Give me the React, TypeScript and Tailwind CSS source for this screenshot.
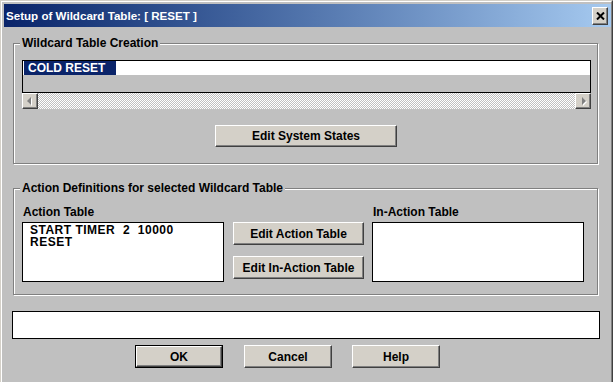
import React from "react";

const btn =
  "flex items-center justify-center bg-[#d4d0c8] border border-t-white border-l-white border-r-[#404040] border-b-[#404040] shadow-[inset_-1px_-1px_0_#808080] text-black";

function Arrow({ dir }: { dir: "left" | "right" }) {
  return (
    <div className="w-[16px] h-[16px] bg-[#d4d0c8] border border-t-white border-l-white border-r-[#404040] border-b-[#404040] shadow-[inset_-1px_-1px_0_#808080] flex items-center justify-center">
      <svg width="8" height="9" viewBox="0 0 8 9">
        {dir === "left" ? (
          <>
            <path d="M5 1 L5 9 L1 5 Z" fill="#fff" transform="translate(1,0)" />
            <path d="M5 0 L5 8 L1 4 Z" fill="#808080" />
          </>
        ) : (
          <>
            <path d="M3 1 L3 9 L7 5 Z" fill="#fff" transform="translate(1,0)" />
            <path d="M3 0 L3 8 L7 4 Z" fill="#808080" />
          </>
        )}
      </svg>
    </div>
  );
}

export default function App() {
  return (
    <div
      className="w-[613px] h-[382px] overflow-hidden bg-[#c0c0c0] border-t border-l border-r border-t-[#d4d0c8] border-l-[#d4d0c8] border-r-[#404040] text-[11px] font-bold text-black"
      style={{ fontFamily: '"Liberation Sans", Arial, sans-serif' }}
    >
      <div className="h-full border-t border-l border-r border-t-white border-l-white border-r-[#808080] pt-[2px] pl-[2px]">
        {/* Title bar */}
        <div className="h-[23px] flex items-center bg-gradient-to-r from-[#0a246a] to-[#a6caf0] pl-[2px] pr-[3px]">
          <span className="text-white text-[11.6px] leading-none">Setup of Wildcard Table: [ RESET ]</span>
          <div className="ml-auto w-[16px] h-[18px] bg-[#d4d0c8] border border-t-white border-l-white border-r-[#404040] border-b-[#404040] shadow-[inset_-1px_-1px_0_#808080] flex items-center justify-center">
            <svg width="9" height="8" viewBox="0 0 9 8">
              <path d="M1 0.5 L8 7.5 M8 0.5 L1 7.5" stroke="#000" strokeWidth="2" fill="none" />
            </svg>
          </div>
        </div>

        {/* Group 1 */}
        <div className="ml-[9px] mt-[16px] relative w-[585px] h-[121px] border border-[#808080] shadow-[inset_1px_1px_0_#fff,1px_1px_0_#fff] pt-[16px] pl-[8px]">
          <div className="absolute left-[6px] top-[-8px] bg-[#c0c0c0] px-[2px] text-[12px] leading-[14px]">
            Wildcard Table Creation
          </div>
          <div className="w-[569px] h-[33px] border border-black bg-[#c0c0c0]">
            <div className="h-[14px] bg-white pl-[1px]">
              <div className="w-[92px] h-[14px] bg-[#0a246a] text-white text-[12px] leading-[14px] pl-[4px]">COLD RESET</div>
            </div>
          </div>
          <div className="w-[569px] h-[16px] flex bg-[repeating-conic-gradient(#ffffff_0_25%,#c0c0c0_0_50%)] bg-[length:2px_2px]">
            <Arrow dir="left" />
            <div className="flex-1" />
            <Arrow dir="right" />
          </div>
          <button className={`${btn} mt-[16px] ml-[193px] w-[182px] h-[22px] text-[12px]`}>Edit System States</button>
        </div>

        {/* Group 2 */}
        <div className="ml-[9px] mt-[24px] relative w-[585px] h-[107px] border border-[#808080] shadow-[inset_1px_1px_0_#fff,1px_1px_0_#fff] pt-[16px] pl-[8px] flex">
          <div className="absolute left-[6px] top-[-8px] bg-[#c0c0c0] px-[2px] text-[12px] leading-[14px]">
            Action Definitions for selected Wildcard Table
          </div>
          <div className="flex flex-col">
            <div className="h-[17px] pl-[1px] text-[12px] leading-[14px]">Action Table</div>
            <div className="w-[202px] h-[60px] border border-black bg-white pl-[7px] pt-[1px] text-[12px] leading-[12px] tracking-[0.5px]">
              <div className="h-[12px]">START TIMER&nbsp; 2&nbsp; 10000</div>
              <div className="h-[12px]">RESET</div>
            </div>
          </div>
          <div className="flex flex-col ml-[9px] pt-[17px]">
            <button className={`${btn} w-[131px] h-[23px] text-[12px]`}>Edit Action Table</button>
            <button className={`${btn} mt-[11px] w-[131px] h-[23px] text-[12px]`}>Edit In-Action Table</button>
          </div>
          <div className="flex flex-col ml-[8px]">
            <div className="h-[17px] pl-[1px] text-[12px] leading-[14px]">In-Action Table</div>
            <div className="w-[212px] h-[60px] border border-black bg-white" />
          </div>
        </div>

        {/* Status */}
        <div className="ml-[8px] mt-[16px] w-[588px] h-[28px] border border-black bg-white" />

        {/* Bottom buttons */}
        <div className="flex mt-[6px] ml-[131px]">
          <div className="w-[88px] h-[23px] border border-black flex">
            <button className={`${btn} flex-1 text-[12px]`}>OK</button>
          </div>
          <button className={`${btn} ml-[21px] w-[88px] h-[23px] text-[12px]`}>Cancel</button>
          <button className={`${btn} ml-[20px] w-[88px] h-[23px] text-[12px]`}>Help</button>
        </div>
      </div>
    </div>
  );
}
